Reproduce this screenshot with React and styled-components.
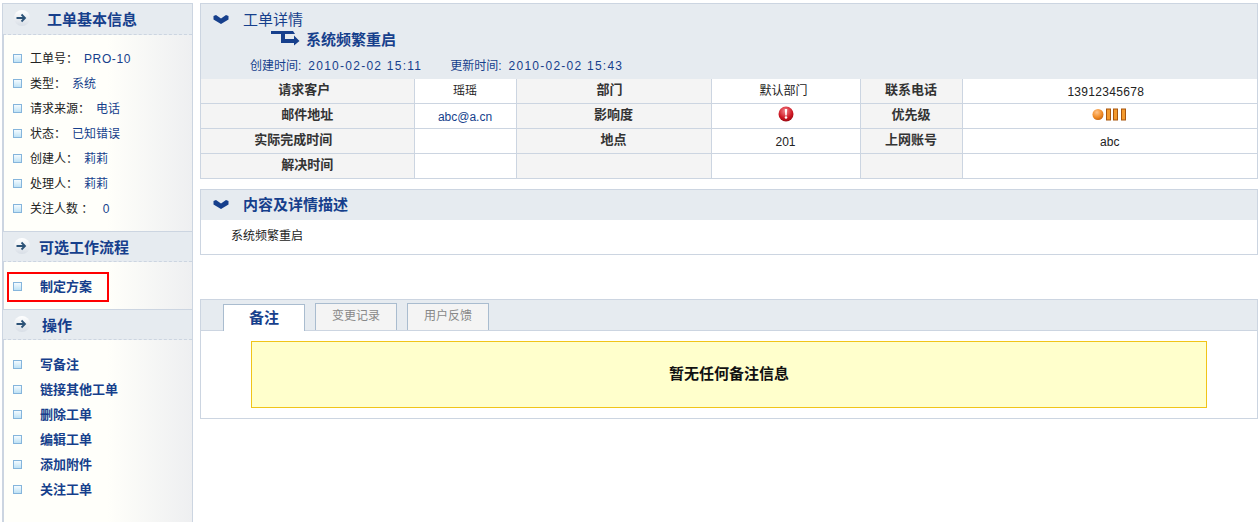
import React from 'react';
import styled, { createGlobalStyle } from 'styled-components';

const GlobalStyle = createGlobalStyle`
  html, body {
    margin: 0;
    padding: 0;
    background: #fff;
    color: #222;
    font-family: "Liberation Sans", "Noto Sans CJK SC", sans-serif;
    font-size: 12px;
  }
`;

const Page = styled.div`
  display: flex;
  align-items: stretch;
  width: 1260px;
  height: 522px;
  overflow: hidden;
`;

const Sidebar = styled.aside`
  box-sizing: border-box;
  width: 191px;
  height: 519px;
  margin: 3px 0 0 2px;
  border-top: 1px solid #ccd5e1;
  border-left: 2px solid #ccd5e1;
  border-right: 1px solid #ccd5e1;
  background: linear-gradient(90deg, #fffffa 0%, #fffffa 55%, #eeeff1 100%);
  flex: none;
`;

const SideHead = styled.div`
  display: flex;
  align-items: center;
  box-sizing: border-box;
  height: 31px;
  margin-left: -1px;
  padding-left: 10px;
  background: #e6ebf0;
  border-top: ${(p) => (p.$first ? 'none' : '1px solid #ccd5e1')};
  border-bottom: 1px dashed #ccd5e1;
  color: #163f8c;
  font-size: 15px;
  font-weight: 700;
`;

const HeadTitle = styled.span`
  margin-left: ${(p) => p.$gap}px;
  padding-bottom: 1px;
`;

const SideList = styled.ul`
  list-style: none;
  margin: 0;
  padding: ${(p) => p.$top}px 0 ${(p) => p.$bottom}px;
`;

const SideItem = styled.li`
  display: flex;
  align-items: center;
  height: 25px;
  padding-left: 9px;
  white-space: nowrap;
`;

const Highlight = styled.li`
  display: flex;
  align-items: center;
  box-sizing: border-box;
  width: 102px;
  height: 30px;
  margin-left: 3px;
  padding: 0 0 1px 4px;
  border: 2px solid #f00;
`;

const Bullet = styled.i`
  display: block;
  box-sizing: border-box;
  flex: none;
  width: 9px;
  height: 9px;
  border: 1px solid #85b5dc;
  background: linear-gradient(180deg, #f4fbff, #bfe2f5);
`;

const Label = styled.span`
  margin-left: 8px;
  padding-bottom: 2px;
  color: #222;
  white-space: pre;
`;

const Value = styled.span`
  margin-left: 6px;
  padding-bottom: ${(p) => (p.$num ? '0' : '2px')};
  color: #163f8c;
  letter-spacing: ${(p) => (p.$num ? '0.6px' : '0')};
`;

const Action = styled.span`
  margin-left: 18px;
  padding-bottom: 2px;
  color: #163f8c;
  font-size: 13px;
  font-weight: 700;
`;

const Main = styled.main`
  display: flex;
  flex-direction: column;
  width: 1058px;
  margin: 3px 0 0 7px;
  flex: none;
`;

const Panel = styled.section`
  box-sizing: border-box;
  border: 1px solid #ccd5e1;
  margin-bottom: ${(p) => p.$after}px;
`;

const DetailHead = styled.header`
  box-sizing: border-box;
  height: 75px;
  padding-top: 6px;
  background: #e6ebf0;
  color: #163f8c;
`;

const TitleRow = styled.div`
  display: flex;
  align-items: center;
  height: 20px;
  padding-left: 12px;
  font-size: 15px;
`;

const SubRow = styled.div`
  display: flex;
  align-items: center;
  height: 20px;
  padding-left: 70px;
  font-size: 15px;
  font-weight: 700;
`;

const MetaRow = styled.div`
  display: flex;
  gap: 28px;
  margin-top: 8px;
  padding-left: 49px;
  height: 16px;
  line-height: 16px;
`;

const MetaDate = styled.span`
  margin-left: 7px;
  letter-spacing: 1.25px;
`;

const HeadText = styled.span`
  margin-left: ${(p) => p.$gap}px;
  padding-bottom: 4px;
  font-weight: ${(p) => (p.$bold ? 700 : 400)};
`;

const InfoTable = styled.table`
  width: 1056px;
  border-collapse: collapse;
  table-layout: fixed;
  tr:first-child td { border-top: none; }
  tr:last-child td { border-bottom: none; }
  td:first-child { border-left: none; }
  td:last-child { border-right: none; }
`;

const Th = styled.td`
  height: 19px;
  padding: 0 ${(p) => p.$shift || 0}px 5px 0;
  border: 1px solid #ccd5e1;
  background: #f4f4f4;
  color: #333;
  font-size: 13px;
  font-weight: 700;
  text-align: center;
`;

const Cell = styled.td`
  height: 20px;
  padding: 0 ${(p) => p.$shift || 0}px 4px 0;
  border: 1px solid #ccd5e1;
  color: #222;
  text-align: center;
`;

const LatinCell = styled.td`
  height: 22px;
  padding: 2px ${(p) => p.$shift || 0}px 0 0;
  border: 1px solid #ccd5e1;
  color: ${(p) => p.$color || '#222'};
  letter-spacing: ${(p) => p.$track || 0}px;
  text-align: center;
`;

const SectionHead = styled.header`
  display: flex;
  align-items: center;
  box-sizing: border-box;
  height: 30px;
  padding-left: 12px;
  background: #e6ebf0;
  color: #163f8c;
  font-size: 15px;
  font-weight: 700;
`;

const Description = styled.div`
  height: 34px;
  padding: 8px 0 0 30px;
  box-sizing: border-box;
  line-height: 16px;
`;

const TabBar = styled.div`
  display: flex;
  align-items: flex-end;
  gap: 10px;
  box-sizing: border-box;
  height: 31px;
  padding-left: 22px;
  background: #e6ebf0;
  border-bottom: 1px solid #ccd5e1;
`;

const Tab = styled.div`
  box-sizing: border-box;
  width: 82px;
  height: 27px;
  margin-bottom: ${(p) => (p.$active ? '-1px' : '0')};
  border: 1px solid #a9bccf;
  border-bottom: none;
  background: ${(p) => (p.$active ? '#fff' : '#f4f4f4')};
  color: ${(p) => (p.$active ? '#163f8c' : '#888')};
  font-size: ${(p) => (p.$active ? '15px' : '12px')};
  font-weight: ${(p) => (p.$active ? 700 : 400)};
  line-height: 25px;
  text-align: center;
`;

const TabBody = styled.div`
  padding: 10px 50px;
  height: 87px;
  box-sizing: border-box;
`;

const Notice = styled.div`
  display: flex;
  align-items: center;
  justify-content: center;
  box-sizing: border-box;
  width: 956px;
  height: 67px;
  padding-bottom: 5px;
  border: 1px solid #f0c419;
  background: #ffffcc;
  color: #111;
  font-size: 15px;
  font-weight: 700;
`;

const ArrowBadge = () => (
  <svg width="18" height="18" viewBox="0 0 18 18" style={{ flex: 'none' }}>
    <defs>
      <linearGradient id="badge" x1="0" y1="0" x2="0" y2="1">
        <stop offset="0" stopColor="#ffffff" />
        <stop offset="1" stopColor="#d8dee6" />
      </linearGradient>
    </defs>
    <circle cx="9" cy="8" r="8" fill="url(#badge)" />
    <path d="M3.5 8h8.5M8.5 4.5 12 8l-3.5 3.5" fill="none" stroke="#2c5277" strokeWidth="1.8" />
  </svg>
);

const Chevron = () => (
  <svg width="16" height="10" viewBox="0 0 16 10" style={{ flex: 'none' }}>
    <path d="M0.5 1 3 0 8 3.5 13 0 15.5 1V4.5L8 9 0.5 4.5Z" fill="#163f8c" />
  </svg>
);

const BranchArrow = () => (
  <svg width="29" height="15" viewBox="0 0 29 15" style={{ flex: 'none', marginBottom: 4 }}>
    <path d="M0 0H22L24 3H14V8H23V4.5L28.5 10 23 14.5V12H10V3H0Z" fill="#163f8c" />
  </svg>
);

const AlertIcon = () => (
  <svg width="16" height="16" viewBox="0 0 16 16" style={{ display: 'block', margin: '0 auto' }}>
    <defs>
      <radialGradient id="alert" cx="0.45" cy="0.3" r="0.75">
        <stop offset="0" stopColor="#f4858c" />
        <stop offset="0.65" stopColor="#cc1420" />
        <stop offset="1" stopColor="#8f0a12" />
      </radialGradient>
    </defs>
    <circle cx="8" cy="8" r="7.5" fill="url(#alert)" />
    <path d="M6.8 3h2.4L8.7 9.5H7.3Z" fill="#fff" />
    <circle cx="8" cy="11.5" r="1.3" fill="#fff" />
  </svg>
);

const PriorityIcon = () => (
  <svg width="36" height="13" viewBox="0 0 36 13" style={{ display: 'block', margin: '0 auto' }}>
    <defs>
      <radialGradient id="ball" cx="0.4" cy="0.3" r="0.8">
        <stop offset="0" stopColor="#ffc48a" />
        <stop offset="0.6" stopColor="#f08a24" />
        <stop offset="1" stopColor="#b85a0c" />
      </radialGradient>
    </defs>
    <circle cx="6" cy="6.5" r="5.5" fill="url(#ball)" />
    {[14.5, 21.5, 29.5].map((x) => (
      <rect key={x} x={x} y="1" width="4" height="11" fill="#f39a2e" stroke="#a8560e" />
    ))}
  </svg>
);

const infoItems = [
  ['工单号：', 'PRO-10', true],
  ['类型：', '系统'],
  ['请求来源：', '电话'],
  ['状态：', '已知错误'],
  ['创建人：', '莉莉'],
  ['处理人：', '莉莉'],
  ['关注人数 ： ', '0', true],
];

const actions = ['写备注', '链接其他工单', '删除工单', '编辑工单', '添加附件', '关注工单'];

export default function App() {
  return (
    <>
      <GlobalStyle />
      <Page>
        <Sidebar>
          <SideHead $first>
            <ArrowBadge />
            <HeadTitle $gap={16}>工单基本信息</HeadTitle>
          </SideHead>
          <SideList $top={11} $bottom={10}>
            {infoItems.map(([label, value, num]) => (
              <SideItem key={label}>
                <Bullet />
                <Label>{label}</Label>
                <Value $num={num}>{value}</Value>
              </SideItem>
            ))}
          </SideList>
          <SideHead>
            <ArrowBadge />
            <HeadTitle $gap={8}>可选工作流程</HeadTitle>
          </SideHead>
          <SideList $top={10} $bottom={7}>
            <Highlight>
              <Bullet />
              <Action>制定方案</Action>
            </Highlight>
          </SideList>
          <SideHead>
            <ArrowBadge />
            <HeadTitle $gap={11}>操作</HeadTitle>
          </SideHead>
          <SideList $top={12} $bottom={0}>
            {actions.map((name) => (
              <SideItem key={name}>
                <Bullet />
                <Action>{name}</Action>
              </SideItem>
            ))}
          </SideList>
        </Sidebar>
        <Main>
          <Panel $after={10}>
            <DetailHead>
              <TitleRow>
                <Chevron />
                <HeadText $gap={14}>工单详情</HeadText>
              </TitleRow>
              <SubRow>
                <BranchArrow />
                <HeadText $gap={6} $bold>系统频繁重启</HeadText>
              </SubRow>
              <MetaRow>
                <span>创建时间:<MetaDate>2010-02-02 15:11</MetaDate></span>
                <span>更新时间:<MetaDate>2010-02-02 15:43</MetaDate></span>
              </MetaRow>
            </DetailHead>
            <InfoTable>
              <colgroup>
                <col style={{ width: 213 }} />
                <col style={{ width: 102 }} />
                <col style={{ width: 195 }} />
                <col style={{ width: 149 }} />
                <col style={{ width: 102 }} />
                <col />
              </colgroup>
              <tbody>
                <tr>
                  <Th $shift={6}>请求客户</Th><Cell>瑶瑶</Cell>
                  <Th $shift={8}>部门</Th><Cell $shift={4}>默认部门</Cell>
                  <Th>联系电话</Th><LatinCell $shift={8} $track={0.3}>13912345678</LatinCell>
                </tr>
                <tr>
                  <Th>邮件地址</Th><LatinCell $color="#163f8c">abc@a.cn</LatinCell>
                  <Th>影响度</Th><Cell><AlertIcon /></Cell>
                  <Th>优先级</Th><Cell><PriorityIcon /></Cell>
                </tr>
                <tr>
                  <Th $shift={28}>实际完成时间</Th><Cell />
                  <Th>地点</Th><LatinCell>201</LatinCell>
                  <Th>上网账号</Th><LatinCell>abc</LatinCell>
                </tr>
                <tr>
                  <Th>解决时间</Th><Cell />
                  <Th /><Cell />
                  <Th /><Cell />
                </tr>
              </tbody>
            </InfoTable>
          </Panel>
          <Panel $after={44}>
            <SectionHead>
              <Chevron />
              <HeadText $gap={14} $bold>内容及详情描述</HeadText>
            </SectionHead>
            <Description>系统频繁重启</Description>
          </Panel>
          <Panel $after={0}>
            <TabBar>
              <Tab $active>备注</Tab>
              <Tab>变更记录</Tab>
              <Tab>用户反馈</Tab>
            </TabBar>
            <TabBody>
              <Notice>暂无任何备注信息</Notice>
            </TabBody>
          </Panel>
        </Main>
      </Page>
    </>
  );
}
